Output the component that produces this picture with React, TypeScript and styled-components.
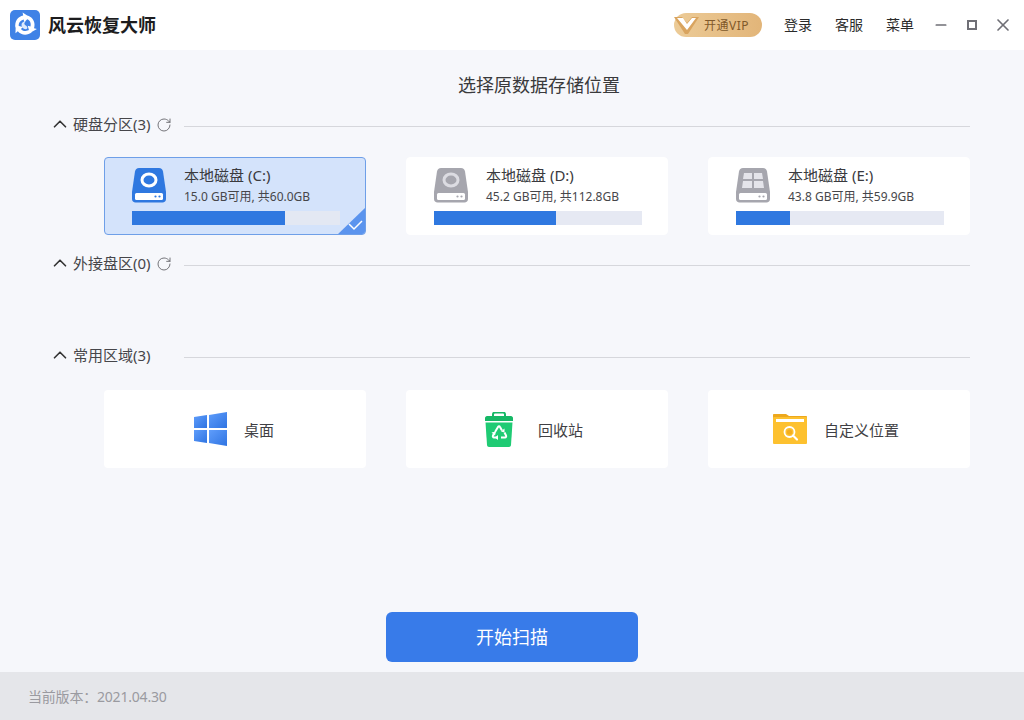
import React from "react";
import styled, { createGlobalStyle } from "styled-components";
import { RotateCw, ChevronUp, Minus, X } from "lucide-react";

const Global = createGlobalStyle`
  html, body { margin: 0; padding: 0; background: #f6f7fb; }
  * { box-sizing: border-box; }
  body { font-family: "Noto Sans", "Noto Sans CJK SC", sans-serif; }
`;

const Page = styled.div`
  width: 1024px; height: 720px; display: flex; flex-direction: column;
  background: #f6f7fb; overflow: hidden;
`;
const TitleBar = styled.header`
  height: 50px; flex: none; background: #fff; display: flex; align-items: center;
  padding: 0 16px 0 10px;
`;
const AppName = styled.div`
  margin-left: 8px; font-size: 18px; font-weight: 700; color: #1c1c1e; line-height: 24px;
`;
const TitleRight = styled.div`
  margin-left: auto; display: flex; align-items: center;
`;
const VipBadge = styled.div`
  width: 88px; height: 24px; border-radius: 12px; display: flex; align-items: center;
  background: linear-gradient(90deg, #eccb97, #e2b579); color: #80592a; font-size: 12px;
  letter-spacing: 0.5px; padding-left: 30px; margin-right: 22px; position: relative; white-space: nowrap;
`;
const VipMark = styled.svg`
  position: absolute; left: 0; top: 2px;
`;
const TopLinks = styled.nav`
  display: flex; gap: 23px; margin-right: 22px;
`;
const TopLink = styled.span`
  font-size: 14px; color: #2b2b2b; line-height: 20px;
`;
const WinControls = styled.div`
  display: flex; gap: 21px; align-items: center;
`;
const WinButton = styled.span`
  width: 10px; height: 14px; display: flex; align-items: center; justify-content: center;
  color: #6f6f76;
  svg { flex: none; }
`;
const MaxBox = styled.i`
  display: block; flex: none; width: 10px; height: 10px; border: 2px solid #6f6f76;
`;

const Main = styled.main`
  flex: 1; display: flex; flex-direction: column; padding: 23px 54px 10px;
`;
const Heading = styled.h1`
  margin: 0 0 18px; padding-left: 54px; text-align: center; font-size: 18px; font-weight: 400;
  color: #3a3a3c; line-height: 24px;
`;
const SectionHead = styled.div<{ $after: number }>`
  display: flex; align-items: center; height: 20px; color: #46464a; font-size: 15px;
  margin-bottom: ${(p) => p.$after}px;
`;
const SectionLabel = styled.span`
  margin-bottom: 3px; white-space: nowrap;
`;
const Chevron = styled(ChevronUp)`
  flex: none; color: #333; margin: 0 2px 2px -5px;
`;
const Refresh = styled(RotateCw)`
  flex: none; color: #6b6b70; margin-left: 5px;
`;
const Rule = styled.div<{ $gap: number }>`
  flex: 1; height: 1px; background: #d6d7dc; margin-left: ${(p) => p.$gap}px; margin-top: 3px;
`;
const CardGrid = styled.div`
  display: grid; grid-template-columns: repeat(3, 262px); gap: 40px; margin-left: 50px;
`;
const DiskCard = styled.div<{ $on?: boolean }>`
  position: relative; height: 78px; border-radius: 4px; padding: 9px 26px 0 28px; overflow: hidden;
  background: ${(p) => (p.$on ? "#d4e3fb" : "#fff")};
  border: 1px solid ${(p) => (p.$on ? "#6e9fe8" : "#fff")};
`;
const DiskTop = styled.div`
  display: flex; align-items: flex-start; height: 44px; margin-left: -1px;
`;
const DiskInfo = styled.div`
  margin: -3px 0 0 18px; display: flex; flex-direction: column;
`;
const DiskName = styled.div`
  font-size: 15px; line-height: 23px; color: #3a3a3e; white-space: nowrap;
`;
const DiskSize = styled.div`
  font-size: 12px; line-height: 20px; color: #46464a; white-space: nowrap;
`;
const Bar = styled.div<{ $on?: boolean }>`
  width: 208px; height: 14px; margin-left: -1px; background: ${(p) => (p.$on ? "#e3e8f3" : "#e6e9f3")};
`;
const BarFill = styled.div`
  height: 100%; background: #2f78e0;
`;
const Corner = styled.svg`
  position: absolute; right: -1px; bottom: -1px;
`;
const Tile = styled.div<{ $gap: number; $nudge?: number }>`
  height: 78px; background: #fff; border-radius: 4px; display: flex; align-items: center;
  justify-content: center; gap: ${(p) => p.$gap}px; color: #3f3f44; font-size: 15px;
  padding-right: ${(p) => p.$nudge ?? 0}px;
`;
const Empty = styled.div`
  height: 72px;
`;
const Spacer19 = styled.div`
  height: 19px;
`;
const StartButton = styled.button`
  align-self: center; width: 252px; height: 50px; margin-top: auto; border: none; border-radius: 6px;
  background: #387be9; color: #fff; font: inherit; font-size: 18px; padding: 0 0 2px;
`;
const Footer = styled.footer`
  height: 48px; flex: none; background: #e5e6ea; display: flex; align-items: center;
  padding-left: 28px; font-size: 14px; color: #9a9aa0; letter-spacing: -0.2px;
`;

const LogoBlade = () => (
  <g>
    <path d="M5.500 17.500C4.300 11.500 8 6.600 13.200 5.600l-.6-3 6.900 4.300-5.300 5.400-.5-2.800C10.300 10.300 8.200 13 8.800 16.500z" fill="#fff" />
  </g>
);
const Logo = () => (
  <svg width="30" height="30" viewBox="0 0 30 30">
    <rect width="30" height="30" rx="5" fill="#3f82e6" />
    <LogoBlade />
    <g transform="rotate(120 15 15)"><LogoBlade /></g>
    <g transform="rotate(240 15 15)"><LogoBlade /></g>
    <path d="M11.500 15c0-2.600 2-4 4.500-3.500-1.500.8-2 1.700-1.500 2.800.5 1 2 1.500 2.700 2.600.6 1-.2 2.200-1.700 2.300-2.300-.4-4-2-4-4.200z" fill="#dce9fc" />
  </svg>
);

const DiskBody = ({ color, children }: { color: string; children: React.ReactNode }) => (
  <svg width="34" height="36" viewBox="0 0 34 36">
    <path d="M7 1h20c2.200 0 3.600 1.300 4 3.400L34 25v7c0 2-1.500 3.500-3.500 3.500h-27C1.500 35.500 0 34 0 32v-7L3 4.400C3.400 2.300 4.800 1 7 1z" fill={color} />
    <rect x="3" y="26" width="28" height="7" rx="1.500" fill="#fff" />
    <circle cx="23.500" cy="29.500" r="1.100" fill={color} />
    <circle cx="27.500" cy="29.500" r="1.100" fill={color} />
    {children}
  </svg>
);
const Ring = ({ stroke }: { stroke: string }) => (
  <ellipse cx="17" cy="13" rx="7" ry="6" fill="none" stroke={stroke} strokeWidth="3" />
);
const Panes = () => (
  <g fill="#e4e4ea">
    <path d="M8 6h8v6H7z" />
    <path d="M18 6h8l1 6h-9z" />
    <path d="M7 14h9v7H6z" />
    <path d="M18 14h9l1 7H18z" />
  </g>
);

const Windows = () => (
  <svg width="34" height="34" viewBox="0 0 34 34">
    <defs>
      <linearGradient id="wg" x1="0" y1="0" x2="1" y2="1">
        <stop offset="0" stopColor="#5f9dfb" />
        <stop offset="1" stopColor="#2f74e2" />
      </linearGradient>
    </defs>
    <g fill="url(#wg)">
      <path d="M0 5l13-2v13H0z" />
      <path d="M15 3L33 0v16H15z" />
      <path d="M0 18h13v13L0 29z" />
      <path d="M15 18h18v16l-18-3z" />
    </g>
  </svg>
);
const Bin = () => (
  <svg width="28" height="35" viewBox="0 0 28 35">
    <path d="M8 5V2.500C8 1.200 9 .5 10 .5h8c1 0 2 .7 2 2V5" fill="none" stroke="#16b866" strokeWidth="2" />
    <path d="M2 4h24c1 0 2 1 2 2v3H0V6c0-1 1-2 2-2z" fill="#16b866" />
    <path d="M.5 10.500h27L26 33c-.1 1-1 2-2 2H4c-1 0-1.900-1-2-2z" fill="#1fcb74" />
    <g fill="none" stroke="#fff" strokeWidth="2">
      <path d="M10 20l3-5c.6-1 1.500-1 2 0l2 3.500" />
      <path d="M19.500 20.500l1.500 3c.5 1 0 2-1 2h-4" />
      <path d="M12 25.500H9c-1 0-1.500-1-1-2l1-2" />
    </g>
    <path d="M19.500 16.500v4l-3.500-1zM13 23v5l-3-2.500zM6.500 20.500l4.500-1-1 4z" fill="#fff" />
  </svg>
);
const Folder = () => (
  <svg width="34" height="30" viewBox="0 0 34 30">
    <path d="M1 0h12l3 2h17c.6 0 1 .4 1 1v3H0V1c0-.6.4-1 1-1z" fill="#eda81d" />
    <rect y="3" width="34" height="27" rx="1" fill="#fdc12f" />
    <rect x="3" y="5" width="28" height="3" fill="#fff" />
    <circle cx="16.500" cy="18" r="5" fill="none" stroke="#fff" strokeWidth="1.800" />
    <circle cx="16.500" cy="18" r="2.600" fill="#f3ad1e" />
    <path d="M20 21.500l4 4" stroke="#fff" strokeWidth="2.200" strokeLinecap="round" />
  </svg>
);

const disks = [
  { name: "本地磁盘 (C:)", size: "15.0 GB可用, 共60.0GB", pct: 73.6, on: true, color: "#2f78e0", inner: <Ring stroke="#fff" /> },
  { name: "本地磁盘 (D:)", size: "45.2 GB可用, 共112.8GB", pct: 58.7, on: false, color: "#a6a6ae", inner: <Ring stroke="#dcdce2" /> },
  { name: "本地磁盘 (E:)", size: "43.8 GB可用, 共59.9GB", pct: 26, on: false, color: "#a6a6ae", inner: <Panes /> },
];

export default function App() {
  return (
    <Page>
      <Global />
      <TitleBar>
        <Logo />
        <AppName>风云恢复大师</AppName>
        <TitleRight>
          <VipBadge>
            <VipMark width="26" height="20" viewBox="0 0 26 20">
              <path d="M0 2h8l5 6 5-6h7L14 19h-3z" fill="#d9a45f" />
              <path d="M3 3h6l4 6 5-6h4L13 15z" fill="#fff" />
            </VipMark>
            开通VIP
          </VipBadge>
          <TopLinks>
            <TopLink>登录</TopLink>
            <TopLink>客服</TopLink>
            <TopLink>菜单</TopLink>
          </TopLinks>
          <WinControls>
            <WinButton><Minus size={16} strokeWidth={2.6} /></WinButton>
            <WinButton><MaxBox /></WinButton>
            <WinButton><X size={20} strokeWidth={2} /></WinButton>
          </WinControls>
        </TitleRight>
      </TitleBar>
      <Main>
        <Heading>选择原数据存储位置</Heading>
        <SectionHead $after={22}>
          <Chevron size={22} strokeWidth={1.8} />
          <SectionLabel>硬盘分区(3)</SectionLabel>
          <Refresh size={16} strokeWidth={1.4} />
          <Rule $gap={12} />
        </SectionHead>
        <CardGrid>
          {disks.map((d) => (
            <DiskCard key={d.name} $on={d.on}>
              <DiskTop>
                <DiskBody color={d.color}>{d.inner}</DiskBody>
                <DiskInfo>
                  <DiskName>{d.name}</DiskName>
                  <DiskSize>{d.size}</DiskSize>
                </DiskInfo>
              </DiskTop>
              <Bar $on={d.on}>
                <BarFill style={{ width: `${d.pct}%` }} />
              </Bar>
              {d.on && (
                <Corner width="29" height="28" viewBox="0 0 29 28">
                  <path d="M29 0v24c0 2-2 4-4 4H0z" fill="#5b94ee" />
                  <path d="M12 17l5 5 8-8" fill="none" stroke="#fff" strokeWidth="1.500" />
                </Corner>
              )}
            </DiskCard>
          ))}
        </CardGrid>
        <Spacer19 />
        <SectionHead $after={0}>
          <Chevron size={22} strokeWidth={1.8} />
          <SectionLabel>外接盘区(0)</SectionLabel>
          <Refresh size={16} strokeWidth={1.4} />
          <Rule $gap={12} />
        </SectionHead>
        <Empty />
        <SectionHead $after={24}>
          <Chevron size={22} strokeWidth={1.8} />
          <SectionLabel>常用区域(3)</SectionLabel>
          <Rule $gap={33} />
        </SectionHead>
        <CardGrid>
          <Tile $gap={16} $nudge={2}><Windows />桌面</Tile>
          <Tile $gap={25} $nudge={6}><Bin />回收站</Tile>
          <Tile $gap={17} $nudge={6}><Folder />自定义位置</Tile>
        </CardGrid>
        <StartButton>开始扫描</StartButton>
      </Main>
      <Footer>当前版本：2021.04.30</Footer>
    </Page>
  );
}
